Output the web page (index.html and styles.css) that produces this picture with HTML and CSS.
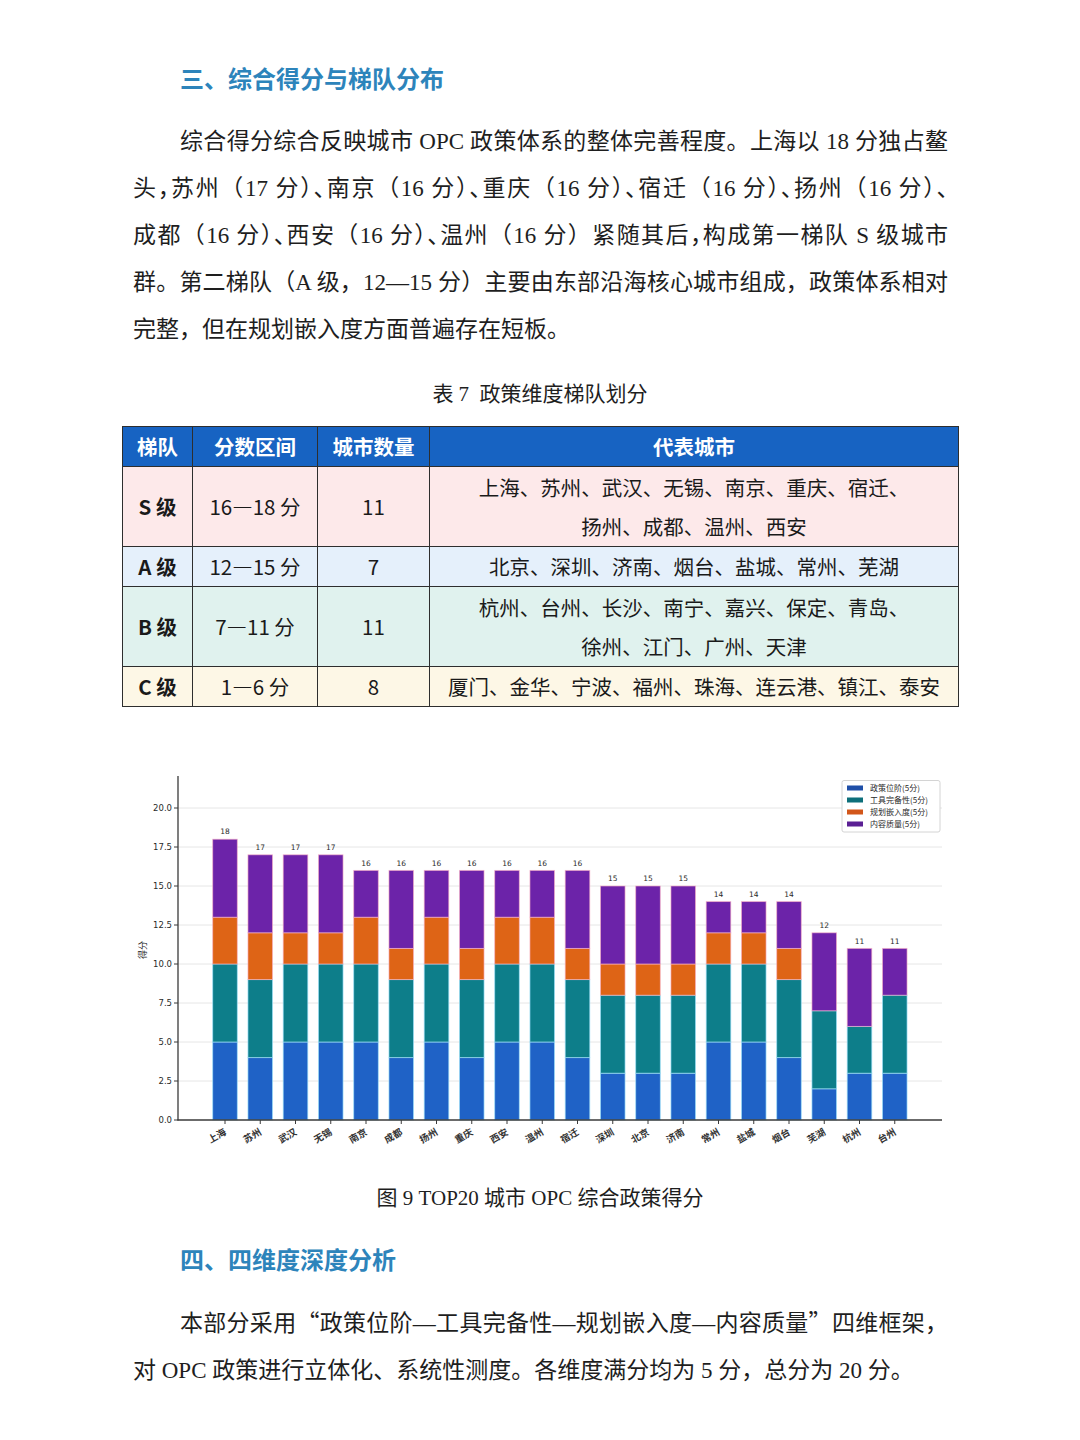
FILE: index.html
```html
<!DOCTYPE html>
<html lang="zh-CN">
<head>
<meta charset="utf-8">
<title>综合得分与梯队分布</title>
<link rel="stylesheet" href="styles.css">
</head>
<body>
<div class="page">
  <h2 class="sec-title">三、综合得分与梯队分布</h2>
  <p class="para">
    <span class="ln first">综合得分综合反映城市 OPC 政策体系的整体完善程度。上海以 18 分独占鳌</span>
    <span class="ln">头<span class="h">，</span>苏州（17 分）<span class="h">、</span>南京（16 分）<span class="h">、</span>重庆（16 分）<span class="h">、</span>宿迁（16 分）<span class="h">、</span>扬州（16 分）<span class="h">、</span></span>
    <span class="ln">成都（16 分）<span class="h">、</span>西安（16 分）<span class="h">、</span>温州（16 分）紧随其后<span class="h">，</span>构成第一梯队 S 级城市</span>
    <span class="ln">群。第二梯队（A 级，12—15 分）主要由东部沿海核心城市组成，政策体系相对</span>
    <span class="ln end">完整，但在规划嵌入度方面普遍存在短板。</span>
  </p>

  <div class="cap cap-table">表 7&nbsp; 政策维度梯队划分</div>

  <table class="tier">
    <colgroup>
      <col class="c1"><col class="c2"><col class="c3"><col class="c4">
    </colgroup>
    <thead>
      <tr><th>梯队</th><th>分数区间</th><th>城市数量</th><th>代表城市</th></tr>
    </thead>
    <tbody>
      <tr class="row-s tall"><td class="tn">S 级</td><td>16—18 分</td><td>11</td><td>上海、苏州、武汉、无锡、南京、重庆、宿迁、<br>扬州、成都、温州、西安</td></tr>
      <tr class="row-a"><td class="tn">A 级</td><td>12—15 分</td><td>7</td><td>北京、深圳、济南、烟台、盐城、常州、芜湖</td></tr>
      <tr class="row-b tall"><td class="tn">B 级</td><td>7—11 分</td><td>11</td><td>杭州、台州、长沙、南宁、嘉兴、保定、青岛、<br>徐州、江门、广州、天津</td></tr>
      <tr class="row-c"><td class="tn">C 级</td><td>1—6 分</td><td>8</td><td>厦门、金华、宁波、福州、珠海、连云港、镇江、泰安</td></tr>
    </tbody>
  </table>

  <svg class="chart" width="836" height="420" viewBox="122 740 836 420" xmlns="http://www.w3.org/2000/svg">
    <defs>
      <g id="bA"><rect class="sb" x="0" y="1042" width="24.6" height="78"/><rect class="st" x="0" y="964" width="24.6" height="78"/><rect class="so" x="0" y="917.2" width="24.6" height="46.8"/><rect class="sp" x="0" y="839.2" width="24.6" height="78"/></g>
      <g id="bB"><rect class="sb" x="0" y="1057.6" width="24.6" height="62.4"/><rect class="st" x="0" y="979.6" width="24.6" height="78"/><rect class="so" x="0" y="932.8" width="24.6" height="46.8"/><rect class="sp" x="0" y="854.8" width="24.6" height="78"/></g>
      <g id="bC"><rect class="sb" x="0" y="1042" width="24.6" height="78"/><rect class="st" x="0" y="964" width="24.6" height="78"/><rect class="so" x="0" y="932.8" width="24.6" height="31.2"/><rect class="sp" x="0" y="854.8" width="24.6" height="78"/></g>
      <g id="bD"><rect class="sb" x="0" y="1042" width="24.6" height="78"/><rect class="st" x="0" y="964" width="24.6" height="78"/><rect class="so" x="0" y="917.2" width="24.6" height="46.8"/><rect class="sp" x="0" y="870.4" width="24.6" height="46.8"/></g>
      <g id="bE"><rect class="sb" x="0" y="1057.6" width="24.6" height="62.4"/><rect class="st" x="0" y="979.6" width="24.6" height="78"/><rect class="so" x="0" y="948.4" width="24.6" height="31.2"/><rect class="sp" x="0" y="870.4" width="24.6" height="78"/></g>
      <g id="bF"><rect class="sb" x="0" y="1073.2" width="24.6" height="46.8"/><rect class="st" x="0" y="995.2" width="24.6" height="78"/><rect class="so" x="0" y="964" width="24.6" height="31.2"/><rect class="sp" x="0" y="886" width="24.6" height="78"/></g>
      <g id="bG"><rect class="sb" x="0" y="1042" width="24.6" height="78"/><rect class="st" x="0" y="964" width="24.6" height="78"/><rect class="so" x="0" y="932.8" width="24.6" height="31.2"/><rect class="sp" x="0" y="901.6" width="24.6" height="31.2"/></g>
      <g id="bH"><rect class="sb" x="0" y="1057.6" width="24.6" height="62.4"/><rect class="st" x="0" y="979.6" width="24.6" height="78"/><rect class="so" x="0" y="948.4" width="24.6" height="31.2"/><rect class="sp" x="0" y="901.6" width="24.6" height="46.8"/></g>
      <g id="bI"><rect class="sb" x="0" y="1088.8" width="24.6" height="31.2"/><rect class="st" x="0" y="1010.8" width="24.6" height="78"/><rect class="sp" x="0" y="932.8" width="24.6" height="78"/></g>
      <g id="bJ"><rect class="sb" x="0" y="1073.2" width="24.6" height="46.8"/><rect class="st" x="0" y="1026.4" width="24.6" height="46.8"/><rect class="sp" x="0" y="948.4" width="24.6" height="78"/></g>
      <g id="bK"><rect class="sb" x="0" y="1073.2" width="24.6" height="46.8"/><rect class="st" x="0" y="995.2" width="24.6" height="78"/><rect class="sp" x="0" y="948.4" width="24.6" height="46.8"/></g>
    </defs>

    <g class="grid">
      <line x1="178" y1="1081" x2="942" y2="1081"/>
      <line x1="178" y1="1042" x2="942" y2="1042"/>
      <line x1="178" y1="1003" x2="942" y2="1003"/>
      <line x1="178" y1="964" x2="942" y2="964"/>
      <line x1="178" y1="925" x2="942" y2="925"/>
      <line x1="178" y1="886" x2="942" y2="886"/>
      <line x1="178" y1="847" x2="942" y2="847"/>
      <line x1="178" y1="808" x2="942" y2="808"/>
    </g>

    <use href="#bA" x="212.7"/>
    <use href="#bB" x="247.95"/>
    <use href="#bC" x="283.2"/>
    <use href="#bC" x="318.45"/>
    <use href="#bD" x="353.7"/>
    <use href="#bE" x="388.95"/>
    <use href="#bD" x="424.2"/>
    <use href="#bE" x="459.45"/>
    <use href="#bD" x="494.7"/>
    <use href="#bD" x="529.95"/>
    <use href="#bE" x="565.2"/>
    <use href="#bF" x="600.45"/>
    <use href="#bF" x="635.7"/>
    <use href="#bF" x="670.95"/>
    <use href="#bG" x="706.2"/>
    <use href="#bG" x="741.45"/>
    <use href="#bH" x="776.7"/>
    <use href="#bI" x="811.95"/>
    <use href="#bJ" x="847.2"/>
    <use href="#bK" x="882.45"/>

    <g class="val">
      <text x="225" y="834">18</text>
      <text x="260.25" y="850">17</text>
      <text x="295.5" y="850">17</text>
      <text x="330.75" y="850">17</text>
      <text x="366" y="865.5">16</text>
      <text x="401.25" y="865.5">16</text>
      <text x="436.5" y="865.5">16</text>
      <text x="471.75" y="865.5">16</text>
      <text x="507" y="865.5">16</text>
      <text x="542.25" y="865.5">16</text>
      <text x="577.5" y="865.5">16</text>
      <text x="612.75" y="881">15</text>
      <text x="648" y="881">15</text>
      <text x="683.25" y="881">15</text>
      <text x="718.5" y="897">14</text>
      <text x="753.75" y="897">14</text>
      <text x="789" y="897">14</text>
      <text x="824.25" y="928">12</text>
      <text x="859.5" y="943.5">11</text>
      <text x="894.75" y="943.5">11</text>
    </g>

    <line class="axis" x1="178" y1="776" x2="178" y2="1120.5"/>
    <line class="axis" x1="177.5" y1="1120" x2="942" y2="1120"/>

    <g class="tick">
      <line x1="174" y1="1120" x2="178" y2="1120"/>
      <line x1="174" y1="1081" x2="178" y2="1081"/>
      <line x1="174" y1="1042" x2="178" y2="1042"/>
      <line x1="174" y1="1003" x2="178" y2="1003"/>
      <line x1="174" y1="964" x2="178" y2="964"/>
      <line x1="174" y1="925" x2="178" y2="925"/>
      <line x1="174" y1="886" x2="178" y2="886"/>
      <line x1="174" y1="847" x2="178" y2="847"/>
      <line x1="174" y1="808" x2="178" y2="808"/>
    </g>
    <g class="ylab">
      <text x="172" y="1123">0.0</text>
      <text x="172" y="1084">2.5</text>
      <text x="172" y="1045">5.0</text>
      <text x="172" y="1006">7.5</text>
      <text x="172" y="967">10.0</text>
      <text x="172" y="928">12.5</text>
      <text x="172" y="889">15.0</text>
      <text x="172" y="850">17.5</text>
      <text x="172" y="811">20.0</text>
    </g>
    <text class="ytitle" x="146" y="950" transform="rotate(-90 146 950)">得分</text>

    <g class="tick">
      <line x1="225" y1="1120" x2="225" y2="1124"/>
      <line x1="260.25" y1="1120" x2="260.25" y2="1124"/>
      <line x1="295.5" y1="1120" x2="295.5" y2="1124"/>
      <line x1="330.75" y1="1120" x2="330.75" y2="1124"/>
      <line x1="366" y1="1120" x2="366" y2="1124"/>
      <line x1="401.25" y1="1120" x2="401.25" y2="1124"/>
      <line x1="436.5" y1="1120" x2="436.5" y2="1124"/>
      <line x1="471.75" y1="1120" x2="471.75" y2="1124"/>
      <line x1="507" y1="1120" x2="507" y2="1124"/>
      <line x1="542.25" y1="1120" x2="542.25" y2="1124"/>
      <line x1="577.5" y1="1120" x2="577.5" y2="1124"/>
      <line x1="612.75" y1="1120" x2="612.75" y2="1124"/>
      <line x1="648" y1="1120" x2="648" y2="1124"/>
      <line x1="683.25" y1="1120" x2="683.25" y2="1124"/>
      <line x1="718.5" y1="1120" x2="718.5" y2="1124"/>
      <line x1="753.75" y1="1120" x2="753.75" y2="1124"/>
      <line x1="789" y1="1120" x2="789" y2="1124"/>
      <line x1="824.25" y1="1120" x2="824.25" y2="1124"/>
      <line x1="859.5" y1="1120" x2="859.5" y2="1124"/>
      <line x1="894.75" y1="1120" x2="894.75" y2="1124"/>
    </g>

    <g class="xlab">
      <text x="227" y="1134" transform="rotate(-30 227 1134)">上海</text>
      <text x="262.25" y="1134" transform="rotate(-30 262.25 1134)">苏州</text>
      <text x="297.5" y="1134" transform="rotate(-30 297.5 1134)">武汉</text>
      <text x="332.75" y="1134" transform="rotate(-30 332.75 1134)">无锡</text>
      <text x="368" y="1134" transform="rotate(-30 368 1134)">南京</text>
      <text x="403.25" y="1134" transform="rotate(-30 403.25 1134)">成都</text>
      <text x="438.5" y="1134" transform="rotate(-30 438.5 1134)">扬州</text>
      <text x="473.75" y="1134" transform="rotate(-30 473.75 1134)">重庆</text>
      <text x="509" y="1134" transform="rotate(-30 509 1134)">西安</text>
      <text x="544.25" y="1134" transform="rotate(-30 544.25 1134)">温州</text>
      <text x="579.5" y="1134" transform="rotate(-30 579.5 1134)">宿迁</text>
      <text x="614.75" y="1134" transform="rotate(-30 614.75 1134)">深圳</text>
      <text x="650" y="1134" transform="rotate(-30 650 1134)">北京</text>
      <text x="685.25" y="1134" transform="rotate(-30 685.25 1134)">济南</text>
      <text x="720.5" y="1134" transform="rotate(-30 720.5 1134)">常州</text>
      <text x="755.75" y="1134" transform="rotate(-30 755.75 1134)">盐城</text>
      <text x="791" y="1134" transform="rotate(-30 791 1134)">烟台</text>
      <text x="826.25" y="1134" transform="rotate(-30 826.25 1134)">芜湖</text>
      <text x="861.5" y="1134" transform="rotate(-30 861.5 1134)">杭州</text>
      <text x="896.75" y="1134" transform="rotate(-30 896.75 1134)">台州</text>
    </g>

    <g class="legend">
      <rect class="lbox" x="842" y="780.5" width="98" height="51.5" rx="2"/>
      <rect class="sb-l" x="847" y="785.5" width="16" height="5"/>
      <rect class="st-l" x="847" y="797.5" width="16" height="5"/>
      <rect class="so-l" x="847" y="809.5" width="16" height="5"/>
      <rect class="sp-l" x="847" y="821.5" width="16" height="5"/>
      <text x="870" y="791">政策位阶(5分)</text>
      <text x="870" y="803">工具完备性(5分)</text>
      <text x="870" y="815">规划嵌入度(5分)</text>
      <text x="870" y="827">内容质量(5分)</text>
    </g>
  </svg>

  <div class="cap cap-fig">图 9 TOP20 城市 OPC 综合政策得分</div>

  <h2 class="sec-title sec-2">四、四维度深度分析</h2>
  <p class="para para-2">
    <span class="ln first">本部分采用<span class="q">“</span>政策位阶—工具完备性—规划嵌入度—内容质量<span class="q">”</span>四维框架，</span>
    <span class="ln end">对 OPC 政策进行立体化、系统性测度。各维度满分均为 5 分，总分为 20 分。</span>
  </p>
</div>
</body>
</html>
```

FILE: styles.css
```css
html, body {
  margin: 0;
  padding: 0;
  background: #ffffff;
}

body {
  color: #1e1e1e;
  font-family: "Liberation Serif", "Noto Sans CJK SC", serif;
}

.page {
  width: 836px;
  padding: 0 122px;
  overflow: hidden;
}

.sec-title {
  margin: 62px 0 0 0;
  padding-left: 58px;
  font-family: "Noto Sans CJK SC", sans-serif;
  font-size: 24px;
  line-height: 32px;
  font-weight: 600;
  color: #2d84bb;
}

.sec-2 {
  margin-top: 31px;
}

.para {
  margin: 24px 10px 0 11px;
  font-family: "Liberation Serif", "Noto Sans CJK SC", serif;
  font-size: 23px;
  line-height: 47px;
  color: #1e1e1e;
}

.para-2 {
  margin-top: 23px;
}

.ln {
  display: block;
  text-align: justify;
  text-align-last: justify;
}

.h {
  font-feature-settings: "halt";
}

.ln.first {
  text-indent: 47px;
}

.ln.end {
  text-align-last: left;
}

.q {
  font-family: "Noto Sans CJK SC", sans-serif;
}

.cap {
  text-align: center;
  font-family: "Liberation Serif", "Noto Sans CJK SC", serif;
  font-size: 21px;
  line-height: 28px;
  color: #1e1e1e;
}

.cap-table {
  margin-top: 27px;
}

.cap-fig {
  margin-top: 24px;
}

/* table */
.tier {
  width: 836px;
  margin-top: 18px;
  border-collapse: collapse;
  table-layout: fixed;
  font-family: "Noto Sans CJK SC", sans-serif;
  font-size: 20.5px;
  color: #1a1a1a;
  border: 1px solid #2e2e2e;
}

.c1 { width: 70px; }
.c2 { width: 125px; }
.c3 { width: 112px; }
.c4 { width: 529px; }

.tier th,
.tier td {
  border: 1px solid #2e2e2e;
  padding: 0;
  text-align: center;
  vertical-align: middle;
  line-height: 39px;
}

.tier th {
  height: 39px;
  background: #1763c2;
  color: #ffffff;
  font-size: 20.5px;
  font-weight: 700;
}

.tier tr td { height: 39px; }
.tier tr.tall td { height: 79px; }

.tier td.tn { font-weight: 700; }

.row-s td { background: #fde9ea; }
.row-a td { background: #e5f0fb; }
.row-b td { background: #e0f2ee; }
.row-c td { background: #fdf7e6; }

/* chart */
.chart {
  display: block;
  margin-top: 33px;
  font-family: "Noto Sans CJK SC", "DejaVu Sans", sans-serif;
}

.sb { fill: #1f62c6; }
.st { fill: #0d7e8a; }
.so { fill: #de6416; }
.sp { fill: #6c23a9; }

.sb, .st {
  stroke: rgba(160, 225, 250, 0.75);
  stroke-width: 0.9;
}
.so, .sp {
  stroke: rgba(250, 180, 200, 0.7);
  stroke-width: 0.9;
}

.sb-l { fill: #1f4fa8; }
.st-l { fill: #0d6f7a; }
.so-l { fill: #d2561a; }
.sp-l { fill: #5b1f94; }

.grid line {
  stroke: #e6e6e6;
  stroke-width: 1;
}

.axis {
  stroke: #3a3a3a;
  stroke-width: 1.3;
}

.tick line {
  stroke: #3a3a3a;
  stroke-width: 1;
}

.val text {
  font-family: "DejaVu Sans", sans-serif;
  font-size: 7.5px;
  fill: #2a2a2a;
  text-anchor: middle;
}

.ylab text {
  font-family: "DejaVu Sans", sans-serif;
  font-size: 8.5px;
  fill: #2a2a2a;
  text-anchor: end;
}

.ytitle {
  font-family: "Noto Sans CJK SC", sans-serif;
  font-size: 9px;
  fill: #2a2a2a;
  text-anchor: middle;
}

.xlab text {
  font-family: "Noto Sans CJK SC", sans-serif;
  font-size: 9.5px;
  font-weight: 700;
  fill: #333333;
  text-anchor: end;
}

.lbox {
  fill: #ffffff;
  stroke: #d4d4d4;
  stroke-width: 1;
}

.legend text {
  font-family: "Noto Sans CJK SC", sans-serif;
  font-size: 8px;
  fill: #2a2a2a;
}
```
